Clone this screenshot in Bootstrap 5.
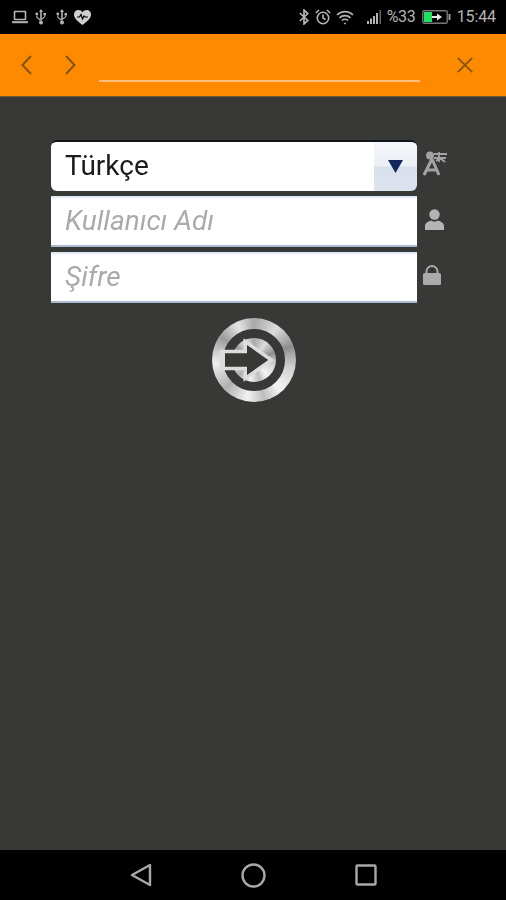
<!DOCTYPE html>
<html lang="tr">
<head>
<meta charset="utf-8">
<title>Giriş</title>
<link href="https://cdn.jsdelivr.net/npm/bootstrap@5.3.0/dist/css/bootstrap.min.css" rel="stylesheet">
<style>
html,body{height:100%;}
body{background:#383836;font-family:Roboto,"Liberation Sans",sans-serif;}
.app-frame{height:900px;width:506px;overflow:hidden;filter:blur(.45px);}
.status-bar{height:34px;background:#000;color:#b4b4b4;font-size:16px;line-height:34px;padding:0 10px 0 12px;}
.status-bar svg{display:block;}
.top-bar{height:63px;background:#ff8a00;padding-left:21px;border-bottom:1px solid #6d5a3a;}
.top-bar svg{display:block;flex:none;}
.url-field{width:321px;height:48px;margin:0 37px 0 23px;padding:0;background:transparent;border:0;border-bottom:2px solid #ffbd80;border-radius:0;transform:translateY(-7px);outline:0;}
.login-area{flex:1 1 auto;padding:43px 0 0 51px;}
.field-row{height:51px;margin-bottom:5px;}
.field-box{width:366px;height:51px;flex:none;}
.lang-select.form-select,.login-input.form-control{height:51px;padding:0 14px 2px;font-size:28px;background-image:none;box-shadow:none;}
.lang-select.form-select{color:#1c1c1c;border:0;border-top:2px solid #10151c;border-radius:6px 0 0 6px;background:#fff;line-height:45px;}
.lang-arrow.input-group-text{width:44px;padding:0;justify-content:center;border:0;border-left:1px solid #b6c0cc;border-top:2px solid #10151c;border-radius:0 6px 6px 0;background:linear-gradient(#f4f6fa 0,#eceff6 48%,#d8e0ec 52%,#dde4ef 100%);}
.login-input.form-control{color:#222;border:0;border-top:2px solid #dfe9f4;border-bottom:2px solid #a9bccf;border-radius:0;background:#fff;font-style:italic;}
.login-input.form-control::placeholder{color:#aaa;opacity:1;}
.side-icon{width:35px;flex:none;}
.side-icon svg{display:block;margin-bottom:5px;}
.go-button{width:84px;height:84px;margin:15px 0 0 161px;padding:0;border:0;border-radius:50%;background:conic-gradient(#a8a8a8 0deg,#dcdcdc 35deg,#8f8f8f 70deg,#d0d0d0 100deg,#f4f4f4 140deg,#bdbdbd 165deg,#f2f2f2 190deg,#b0b0b0 225deg,#efefef 265deg,#9c9c9c 305deg,#e4e4e4 335deg,#a8a8a8 360deg);}
.go-button svg{display:block;}
.nav-bottom{height:50px;background:#000;flex:none;}
.nav-bottom svg{display:block;}
</style>
</head>
<body class="m-0">
<div class="app-frame d-flex flex-column">
  <div class="status-bar d-flex align-items-center justify-content-between flex-none">
    <div class="d-flex align-items-center">
      <svg width="16" height="14" viewBox="0 0 16 14" class="me-2" fill="none" stroke="#b4b4b4" stroke-width="1.6"><rect x="2.5" y="1.5" width="11" height="8" rx=".5"/><path d="M0 12.2h16" stroke-width="2"/></svg>
      <svg width="12" height="16" viewBox="0 0 12 16" class="me-2" fill="#b4b4b4" style="margin-left:-1px"><path d="M6 0l2 3H6.800v8.500H5.200V3H4z"/><rect x="8.500" y="4" width="2.500" height="2.500"/><circle cx="1.800" cy="5" r="1.400"/><path d="M9.200 6.500h1v1.400L6.500 11V9.600l2.700-2.100zM1.300 6.400h1v1.500l3 2.300V12L1.300 8.600z"/><circle cx="6" cy="13.500" r="2"/></svg>
      <svg width="12" height="16" viewBox="0 0 12 16" class="me-1" fill="#b4b4b4" style="margin-left:1px"><path d="M6 0l2 3H6.800v8.500H5.200V3H4z"/><rect x="8.500" y="4" width="2.500" height="2.500"/><circle cx="1.800" cy="5" r="1.400"/><path d="M9.200 6.500h1v1.400L6.500 11V9.600l2.700-2.100zM1.300 6.400h1v1.500l3 2.300V12L1.300 8.600z"/><circle cx="6" cy="13.500" r="2"/></svg>
      <svg width="17" height="15" viewBox="0 0 17 15" style="margin-left:2px"><path fill="#d0d0d0" d="M8.500 15C3 10.500 0 7.800 0 4.400 0 1.800 2 0 4.300 0c1.700 0 3.200.8 4.200 2.300C9.500.8 11 0 12.700 0 15 0 17 1.800 17 4.400c0 3.400-3 6.100-8.500 10.600z"/><path fill="none" stroke="#000" stroke-width="1.200" d="M3 7h2.500l1.500-2.500L8.500 9l1.500-3 1 1h3"/></svg>
    </div>
    <div class="d-flex align-items-center">
      <svg width="10" height="16" viewBox="0 0 10 16" fill="none" stroke="#b4b4b4" stroke-width="1.700"><path d="M.8 4l8 7.500L5 15V1l3.800 3.500L.8 12"/></svg>
      <svg width="16" height="16" viewBox="0 0 16 16" fill="none" stroke="#b4b4b4" stroke-width="1.600" style="margin-left:6px"><circle cx="8" cy="9" r="5.700"/><path d="M8 5.500V9l2.500 1.500M.8 4L4 1M15.200 4L12 1"/></svg>
      <svg width="18" height="15" viewBox="0 0 18 15" fill="none" stroke="#b4b4b4" stroke-width="1.700" style="margin-left:5px"><path d="M1 5c4.500-4.600 11.500-4.600 16 0M3.500 7.800c3-3 8-3 11 0M6 10.500c1.600-1.500 4.400-1.500 6 0"/><path d="M9 14.800l1.500-2H7.500z" fill="#b4b4b4" stroke="none"/></svg>
      <svg width="15" height="14" viewBox="0 0 15 14" fill="#b4b4b4" style="margin-left:13px"><rect x="0" y="11" width="2" height="3"/><rect x="3" y="8.500" width="2" height="5.500"/><rect x="6" y="6" width="2" height="8"/><rect x="9" y="3" width="2" height="11"/><rect x="12.500" y="0" width="1.500" height="14" fill="#666"/></svg>
      <span style="margin-left:5px;width:30px;letter-spacing:-.3px">%33</span>
      <svg width="29" height="16" viewBox="0 0 29 16" style="margin-left:5px"><rect x=".8" y="1.800" width="24.400" height="12.400" rx="1.500" fill="none" stroke="#777" stroke-width="1.400"/><rect x="2" y="3" width="8" height="10" fill="#20e060"/><path d="M10 7h5V4.500L20 8l-5 3.500V9h-5z" fill="#e8e8e8"/><rect x="26.500" y="5" width="2" height="6" fill="#999"/></svg>
      <span style="margin-left:6px;letter-spacing:-.1px">15:44</span>
    </div>
  </div>

  <div class="top-bar d-flex align-items-center flex-none">
    <svg width="11" height="20" viewBox="0 0 11 20" fill="none" stroke="#7f5510" stroke-width="2"><path d="M10 1L1.500 10l8.500 9"/></svg>
    <svg width="11" height="20" viewBox="0 0 11 20" fill="none" stroke="#7f5510" stroke-width="2" style="margin-left:33px"><path d="M1 1l8.500 9L1 19"/></svg>
    <input class="url-field form-control" type="text" aria-label="Adres">
    <svg width="16" height="16" viewBox="0 0 16 16" fill="none" stroke="#7f5510" stroke-width="1.700"><path d="M.8.800l14.400 14.400M15.200.800L.8 15.200"/></svg>
  </div>

  <div class="login-area">
    <div class="field-row d-flex align-items-center">
      <div class="field-box input-group flex-nowrap">
        <select class="lang-select form-select" aria-label="Dil"><option>Türkçe</option></select>
        <span class="lang-arrow input-group-text"><svg width="15" height="13" viewBox="0 0 15 13"><path d="M0 0h15L7.500 13z" fill="#14245c"/></svg></span>
      </div>
      <div class="side-icon d-flex justify-content-center">
        <svg width="27" height="25" viewBox="0 0 27 25" fill="none" stroke="#a3a3a3"><path d="M11 8L3 24M11 8l7 16M6 19h10" stroke-width="3"/><circle cx="9" cy="4.500" r="4" fill="#a3a3a3" stroke="none"/><path d="M13 3h13M13 7h12M18 1v10M15 10l4-3 5 4" stroke-width="1.800"/></svg>
      </div>
    </div>
    <div class="field-row d-flex align-items-center">
      <div class="field-box"><input class="login-input form-control" type="text" placeholder="Kullanıcı Adı"></div>
      <div class="side-icon d-flex justify-content-center">
        <svg width="19" height="21" viewBox="0 0 19 21" fill="#b4b4b4"><circle cx="9.500" cy="5.500" r="5.200"/><path d="M0 21v-4c0-3 3-4.500 6-5.500 2 1.500 5 1.500 7 0 3 1 6 2.500 6 5.500v4z"/></svg>
      </div>
    </div>
    <div class="field-row d-flex align-items-center">
      <div class="field-box"><input class="login-input form-control" type="password" placeholder="Şifre"></div>
      <div class="side-icon d-flex justify-content-center">
        <svg width="18" height="20" viewBox="0 0 18 20" style="margin-right:5px"><path d="M3.500 9V6.500a5.500 5.500 0 0 1 11 0V9" fill="none" stroke="#aaa" stroke-width="2"/><rect y="8" width="18" height="12" rx="1.500" fill="#aaa"/></svg>
      </div>
    </div>
    <button class="go-button d-block" type="button" aria-label="Giriş">
      <svg width="84" height="84" viewBox="0 0 84 84">
        <circle cx="42" cy="42" r="26.500" fill="none" stroke="#383836" stroke-width="9"/>
        <path d="M11 35.300h24V27l21.300 15L35 57v-8.300H11z" fill="#dcdcdc" stroke="#dcdcdc" stroke-width="7" stroke-linejoin="miter"/>
        <path d="M13 35.300h22V27l21.300 15L35 57v-8.300H13z" fill="#383836"/>
      </svg>
    </button>
  </div>

  <div class="nav-bottom d-flex align-items-center flex-none">
    <svg width="22" height="24" viewBox="0 0 22 24" fill="none" stroke="#a8a8a8" stroke-width="2.400" stroke-linejoin="round" style="margin-left:130px"><path d="M20 2v20L2 12z"/></svg>
    <svg width="25" height="25" viewBox="0 0 25 25" fill="none" stroke="#a8a8a8" stroke-width="2.400" style="margin-left:89px"><circle cx="12.500" cy="12.500" r="11"/></svg>
    <svg width="22" height="22" viewBox="0 0 22 22" fill="none" stroke="#a8a8a8" stroke-width="2.400" style="margin-left:89px"><rect x="1.500" y="1.500" width="19" height="19" rx="1"/></svg>
  </div>
</div>
<script src="https://cdn.jsdelivr.net/npm/bootstrap@5.3.0/dist/js/bootstrap.bundle.min.js"></script>
</body>
</html>
